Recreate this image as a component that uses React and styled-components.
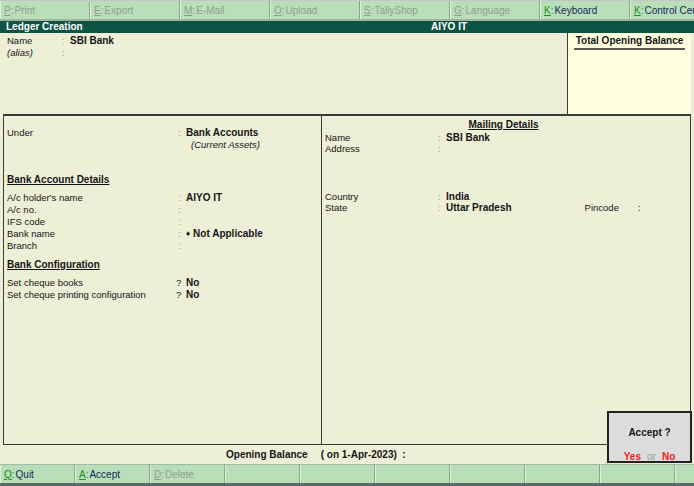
import React from 'react';
import styled, { createGlobalStyle } from 'styled-components';

const Global = createGlobalStyle`
  *, *::before, *::after { box-sizing: border-box; }
  html, body { margin: 0; padding: 0; background: #eeefd7; }
  body { font-family: "Liberation Sans", Arial, sans-serif; }
`;

const Screen = styled.div`
  position: relative;
  width: 694px;
  height: 486px;
  display: flex;
  flex-direction: column;
  overflow: hidden;
  background: #eeefd7;
  color: #151515;
  font-size: 9.5px;
`;

const ButtonBar = styled.div`
  flex: none;
  height: ${p => p.$h}px;
  display: flex;
  background: #b9dfb9;
  overflow: hidden;
  border-top: 1px solid ${p => p.$top};
  border-bottom: ${p => p.$bottom};
`;

const BarButton = styled.div`
  flex: none;
  width: ${p => p.$w}px;
  display: flex;
  align-items: center;
  padding-left: 3px;
  white-space: nowrap;
  font-size: 10px;
  border-left: 1px solid #e2f1e2;
  border-right: 1px solid #8fa48f;
  color: ${p => (p.$off ? '#8e9e8e' : '#14285a')};
`;

const Key = styled.span`
  text-decoration: underline;
  color: ${p => (p.$off ? '#8e9e8e' : '#1f8a2a')};
`;

const Colon = styled.span`
  color: ${p => (p.$off ? '#8e9e8e' : '#1f8a2a')};
  margin-right: 1px;
`;

const TitleBar = styled.div`
  flex: none;
  height: 12px;
  display: grid;
  grid-template-columns: 340px 218px 1fr;
  background: #0e5444;
  color: #fff;
  font-weight: bold;
  font-size: 10px;
  line-height: 12px;
`;

const TitleLeft = styled.div`
  padding-left: 6px;
`;

const TitleCenter = styled.div`
  text-align: center;
`;

const Main = styled.div`
  flex: 1;
  display: flex;
  flex-direction: column;
  padding: 0 3px;
`;

const TopSection = styled.div`
  flex: none;
  height: 81px;
  display: flex;
`;

const NameBlock = styled.div`
  flex: 1;
  padding: 2px 0 0 4px;
`;

const FieldGrid = styled.div`
  display: grid;
  grid-template-columns: ${p => p.$cols};
  line-height: ${p => p.$lh || 12}px;
  align-items: center;
`;

const Label = styled.div`
  font-style: ${p => (p.$italic ? 'italic' : 'normal')};
  white-space: nowrap;
`;

const Sep = styled.div`
  color: ${p => (p.$q ? '#151515' : '#9a9a8a')};
`;

const Value = styled.div`
  font-weight: bold;
  font-size: 10px;
  white-space: nowrap;
  display: flex;
  align-items: center;
`;

const SubValue = styled.div`
  font-style: italic;
  padding-left: 5px;
`;

const TotalBox = styled.div`
  flex: none;
  width: 124px;
  background: #ffffe0;
  border-left: 1px solid #3c3c3c;
  display: flex;
  justify-content: center;
  padding-top: 2px;
`;

const Heading = styled.div`
  align-self: flex-start;
  font-weight: bold;
  font-size: 10px;
  line-height: 12px;
  text-decoration: ${p => (p.$thick ? 'none' : 'underline')};
  border-bottom: ${p => (p.$thick ? '2px solid #5a5a50' : 'none')};
  padding: ${p => (p.$thick ? '0 2px 1px' : '0')};
`;

const MiddleSection = styled.div`
  flex: none;
  height: 331px;
  display: grid;
  grid-template-columns: 318px 1fr;
  border-top: 2px solid #3a3a3a;
  border-left: 1px solid #3a3a3a;
  border-right: 1px solid #3a3a3a;
  border-bottom: 1px solid #3a3a3a;
`;

const LeftPanel = styled.div`
  border-right: 1px solid #3a3a3a;
  padding: 11px 0 0 3px;
  display: flex;
  flex-direction: column;
`;

const RightPanel = styled.div`
  padding: 3px 0 0 3px;
  display: flex;
  flex-direction: column;
`;

const Block = styled.div`
  margin-top: ${p => p.$mt || 0}px;
`;

const CenterHead = styled.div`
  display: flex;
  justify-content: center;
  padding-right: 8px;
`;

const Diamond = styled.span`
  font-size: 8px;
  margin-right: 3px;
`;

const Pin = styled.span`
  font-weight: normal;
  font-size: 9.5px;
  margin-left: ${p => p.$ml}px;
`;

const BalanceRow = styled.div`
  flex: 1;
  display: flex;
  align-items: center;
  padding-left: 223px;
  font-weight: bold;
  font-size: 10px;
  gap: 13px;
`;

const BottomStrip = styled.div`
  flex: none;
  height: 3px;
  background: #5c6a68;
`;

const AcceptBox = styled.div`
  position: absolute;
  right: 2px;
  bottom: 23px;
  width: 85px;
  height: 52px;
  background: #dcdcdc;
  border: 2px solid #222;
  display: flex;
  flex-direction: column;
  align-items: center;
  font-size: 10px;
  font-weight: bold;
  padding-top: 14px;
`;

const AcceptAnswer = styled.div`
  margin-top: 13px;
  display: flex;
  gap: 6px;
`;

const Choice = styled.span`
  color: ${p => (p.$dim ? '#9a9a9a' : '#f21c1c')};
  font-weight: ${p => (p.$dim ? 'normal' : 'bold')};
`;

const topButtons = [
  ['P', 'Print', true],
  ['E', 'Export', true],
  ['M', 'E-Mail', true],
  ['O', 'Upload', true],
  ['S', 'TallyShop', true],
  ['G', 'Language', true],
  ['K', 'Keyboard', false],
  ['K', 'Control Centre', false],
];

const bottomButtons = [
  ['Q', 'Quit', false],
  ['A', 'Accept', false],
  ['D', 'Delete', true],
  null, null, null, null, null, null, null,
];

function BarItem({ item, w }) {
  if (!item) return <BarButton $w={w} />;
  const [k, text, off] = item;
  return (
    <BarButton $w={w} $off={off}>
      <Key $off={off}>{k}</Key>
      <Colon $off={off}>:</Colon>
      {text}
    </BarButton>
  );
}

export default function App() {
  return (
    <>
      <Global />
      <Screen>
        <ButtonBar $h={21} $top="#c6c6c6" $bottom="2px solid #a3b3a3">
          {topButtons.map((b, i) => <BarItem key={i} item={b} w={90} />)}
        </ButtonBar>
        <TitleBar>
          <TitleLeft>Ledger Creation</TitleLeft>
          <TitleCenter>AIYO IT</TitleCenter>
          <div />
        </TitleBar>
        <Main>
          <TopSection>
            <NameBlock>
              <FieldGrid $cols="55px 8px 1fr">
                <Label>Name</Label>
                <Sep>:</Sep>
                <Value>SBI Bank</Value>
                <Label $italic>(alias)</Label>
                <Sep>:</Sep>
                <Value />
              </FieldGrid>
            </NameBlock>
            <TotalBox>
              <Heading $thick>Total Opening Balance</Heading>
            </TotalBox>
          </TopSection>
          <MiddleSection>
            <LeftPanel>
              <FieldGrid $cols="171px 8px 1fr">
                <Label>Under</Label>
                <Sep>:</Sep>
                <Value>Bank Accounts</Value>
                <Label />
                <Sep />
                <SubValue>(Current Assets)</SubValue>
              </FieldGrid>
              <Block $mt={23}>
                <Heading>Bank Account Details</Heading>
              </Block>
              <Block $mt={6}>
                <FieldGrid $cols="171px 8px 1fr">
                  <Label>A/c holder's name</Label>
                  <Sep>:</Sep>
                  <Value>AIYO IT</Value>
                  <Label>A/c no.</Label>
                  <Sep>:</Sep>
                  <Value />
                  <Label>IFS code</Label>
                  <Sep>:</Sep>
                  <Value />
                  <Label>Bank name</Label>
                  <Sep>:</Sep>
                  <Value><Diamond>♦</Diamond>Not Applicable</Value>
                  <Label>Branch</Label>
                  <Sep>:</Sep>
                  <Value />
                </FieldGrid>
              </Block>
              <Block $mt={7}>
                <Heading>Bank Configuration</Heading>
              </Block>
              <Block $mt={6}>
                <FieldGrid $cols="169px 10px 1fr">
                  <Label>Set cheque books</Label>
                  <Sep $q>?</Sep>
                  <Value>No</Value>
                  <Label>Set cheque printing configuration</Label>
                  <Sep $q>?</Sep>
                  <Value>No</Value>
                </FieldGrid>
              </Block>
            </LeftPanel>
            <RightPanel>
              <CenterHead>
                <Heading>Mailing Details</Heading>
              </CenterHead>
              <Block $mt={1}>
                <FieldGrid $cols="113px 8px 1fr" $lh={11}>
                  <Label>Name</Label>
                  <Sep>:</Sep>
                  <Value>SBI Bank</Value>
                  <Label>Address</Label>
                  <Sep>:</Sep>
                  <Value />
                </FieldGrid>
              </Block>
              <Block $mt={37}>
                <FieldGrid $cols="113px 8px 1fr" $lh={11}>
                  <Label>Country</Label>
                  <Sep>:</Sep>
                  <Value>India</Value>
                  <Label>State</Label>
                  <Sep>:</Sep>
                  <Value>
                    Uttar Pradesh
                    <Pin $ml={73}>Pincode</Pin>
                    <Pin $ml={19}>:</Pin>
                  </Value>
                </FieldGrid>
              </Block>
            </RightPanel>
          </MiddleSection>
          <BalanceRow>
            <span>Opening Balance</span>
            <span>( on 1-Apr-2023)&nbsp;&nbsp;:</span>
          </BalanceRow>
        </Main>
        <ButtonBar $h={19} $top="#a8b8a8" $bottom="none">
          {bottomButtons.map((b, i) => <BarItem key={i} item={b} w={75} />)}
        </ButtonBar>
        <BottomStrip />
        <AcceptBox>
          <div>Accept ?</div>
          <AcceptAnswer>
            <Choice>Yes</Choice>
            <Choice $dim>or</Choice>
            <Choice>No</Choice>
          </AcceptAnswer>
        </AcceptBox>
      </Screen>
    </>
  );
}
